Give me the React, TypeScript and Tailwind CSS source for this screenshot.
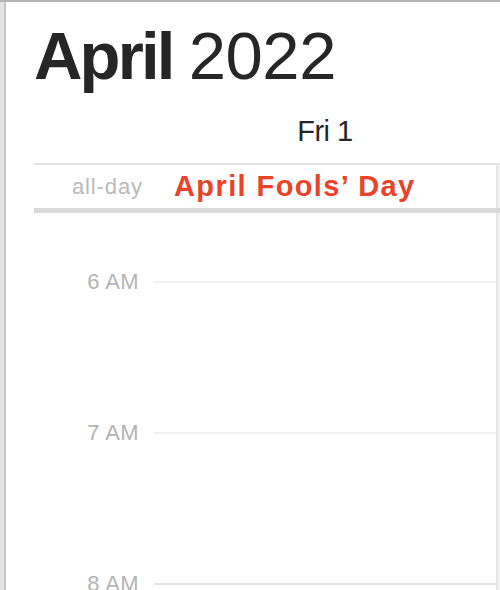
import React from 'react';

const hours = [
  { label: '6 AM', line: 'bg-[#f1f1f1]' },
  { label: '7 AM', line: 'bg-[#f1f1f1]' },
  { label: '8 AM', line: 'bg-[#e4e4e4]' },
];

const App: React.FC = () => {
  return (
    <div className="w-[500px] h-[590px] overflow-hidden bg-white border-t-2 border-[#b4b4b4] flex font-['Liberation_Sans',Arial,sans-serif]">
      <div className="w-[4px] shrink-0 bg-[#e3e3e3]" />
      <div className="w-[2px] shrink-0 bg-[#c6c6c6]" />

      <div className="flex-1 flex flex-col">
        <h1 className="shrink-0 mt-[20px] ml-[28px] h-[67px] text-[67px] leading-none text-[#262626] whitespace-nowrap">
          <span className="font-bold tracking-[-2.8px]">April</span>
          <span className="ml-[16px] font-normal tracking-[-0.4px]">2022</span>
        </h1>

        <div className="shrink-0 ml-[28px] mt-[28px] h-[29px] flex">
          <div className="w-[120px]" />
          <div className="flex-1 text-center text-[29px] leading-none text-[#262626] tracking-[-0.5px]">Fri 1</div>
          <div className="w-[4px]" />
        </div>

        <div className="shrink-0 ml-[28px] mt-[17px] h-[2px] bg-[#e2e2e2]" />

        <div className="shrink-0 ml-[28px] h-[43px] flex">
          <div className="w-[120px] flex items-center justify-end pr-[11px] text-[22px] leading-none text-[#bababa] tracking-[0.9px]">
            all-day
          </div>
          <div className="flex-1 flex items-center pl-[20px] border-r-2 border-[#e6e6e6] text-[29px] leading-none font-bold text-[#ea432a] tracking-[1.4px] whitespace-nowrap">
            April Fools’ Day
          </div>
          <div className="w-[2px] bg-[#f3f3f3]" />
        </div>

        <div className="shrink-0 ml-[28px] h-[5px] bg-[#d8d8d8]" />

        <div className="shrink-0 ml-[28px] flex-1 flex">
          <div className="flex-1 flex flex-col gap-[129px] pt-[58px] border-r-2 border-[#e6e6e6]">
            {hours.map((h) => (
              <div key={h.label} className="h-[22px] flex items-center shrink-0">
                <div className="w-[120px] pr-[15px] text-right text-[22px] leading-none text-[#b4b4b4] tracking-[0.4px]">
                  {h.label}
                </div>
                <div className={`flex-1 h-[2px] ${h.line}`} />
              </div>
            ))}
          </div>
          <div className="w-[2px] bg-[#f3f3f3]" />
        </div>
      </div>
    </div>
  );
};

export default App;
